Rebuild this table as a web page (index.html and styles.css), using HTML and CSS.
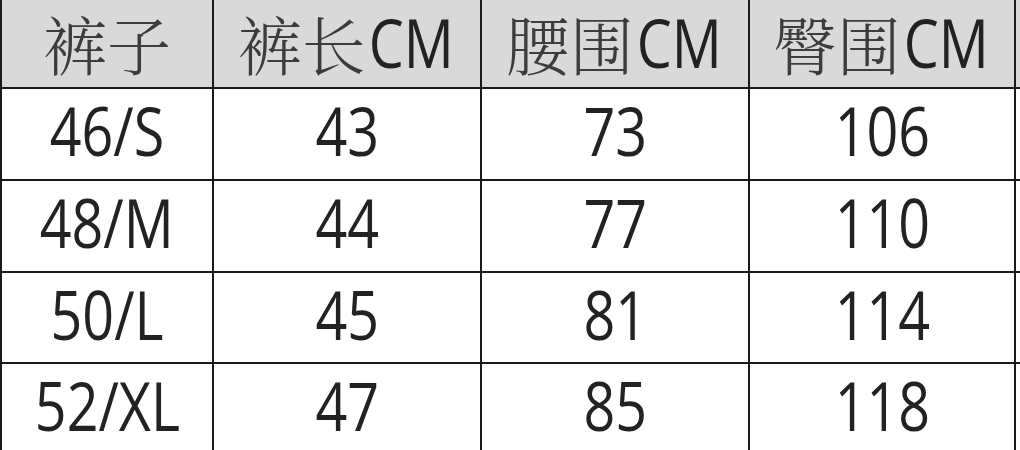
FILE: index.html
```html
<!DOCTYPE html>
<html lang="zh-CN">
<head>
<meta charset="utf-8">
<link rel="stylesheet" href="styles.css">
</head>
<body>
<div class="sheet">
  <div class="cell head"><span class="cjk">裤子</span></div>
  <div class="cell head"><span class="cjk">裤长</span><span class="lat">CM</span></div>
  <div class="cell head"><span class="cjk">腰围</span><span class="lat">CM</span></div>
  <div class="cell head"><span class="cjk">臀围</span><span class="lat">CM</span></div>
  <div class="cell head"></div>

  <div class="cell"><span class="lat">46/S</span></div>
  <div class="cell"><span class="lat">43</span></div>
  <div class="cell"><span class="lat">73</span></div>
  <div class="cell"><span class="lat">106</span></div>
  <div class="cell"></div>

  <div class="cell"><span class="lat">48/M</span></div>
  <div class="cell"><span class="lat">44</span></div>
  <div class="cell"><span class="lat">77</span></div>
  <div class="cell"><span class="lat">110</span></div>
  <div class="cell"></div>

  <div class="cell"><span class="lat">50/L</span></div>
  <div class="cell"><span class="lat">45</span></div>
  <div class="cell"><span class="lat">81</span></div>
  <div class="cell"><span class="lat">114</span></div>
  <div class="cell"></div>

  <div class="cell"><span class="lat">52/XL</span></div>
  <div class="cell"><span class="lat">47</span></div>
  <div class="cell"><span class="lat">85</span></div>
  <div class="cell"><span class="lat">118</span></div>
  <div class="cell"></div>
</div>
</body>
</html>
```
FILE: styles.css
```css
html, body {
  margin: 0;
  padding: 0;
  background: #ffffff;
  overflow: hidden;
}
.sheet {
  display: grid;
  grid-template-columns: 210px 266px 266px 264px 200px;
  grid-template-rows: 87px 90px 90px 89px 90px;
  gap: 2px;
  padding-left: 2px;
  background: #1a1a1a;
  width: 1020px;
  height: 450px;
  overflow: hidden;
}
.cell {
  background: #ffffff;
  display: flex;
  align-items: center;
  justify-content: center;
  white-space: nowrap;
  padding-bottom: 6px;
  box-sizing: border-box;
}
.head {
  background: #d9d9d9;
  padding-bottom: 2px;
}
.cjk {
  font-family: "Noto Serif CJK SC", "Noto Sans CJK SC", serif;
  font-size: 64px;
  font-weight: 300;
  color: #3c3c3c;
  line-height: 1.1;
}
.lat {
  display: inline-block;
  font-family: "Open Sans", "Noto Sans", sans-serif;
  font-size: 67px;
  font-weight: 400;
  color: #222222;
  line-height: 1.1;
  transform: scaleX(0.83);
}
.head .lat {
  margin-left: -6px;
  margin-right: -6px;
}
```
